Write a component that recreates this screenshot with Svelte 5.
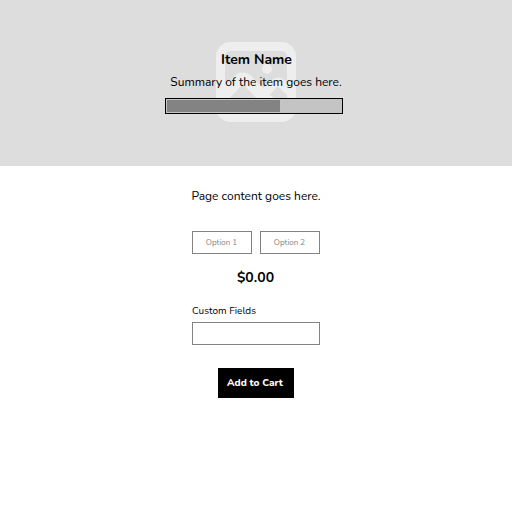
<script>
  const options = ['Option 1', 'Option 2'];
  let custom = $state('');
  const progress = 65;
</script>

<main>
  <header>
    <svg class="picture" viewBox="0 0 80 80" aria-hidden="true">
      <rect x="4.5" y="4.5" width="71" height="71" rx="10" fill="none" stroke="#eee" stroke-width="9" />
      <path d="M7 54 L22 39 Q27 34 32 39 L66 73" fill="none" stroke="#eee" stroke-width="12" />
      <path d="M48 52 L58 42 Q62 38 66 42 L73 49" fill="none" stroke="#eee" stroke-width="9" />
      <circle cx="51" cy="27" r="5" fill="#eee" />
    </svg>
    <h1><span>Item Name</span></h1>
    <p class="summary"><span>Summary of the item goes here.</span></p>
    <div class="bar"><div class="fill" style="width: {progress}%"></div></div>
  </header>
  <section>
    <p class="content"><span>Page content goes here.</span></p>
    <div class="options">
      {#each options as option}<button>{option}</button>{/each}
    </div>
    <strong class="price">$0.00</strong>
    <label>Custom Fields<input bind:value={custom} /></label>
    <button class="cart">Add to Cart</button>
  </section>
</main>

<style>
  :global(body) { margin: 0; background: #fff; }
  main { width: 512px; height: 512px; font-family: Nunito, "Noto Sans", sans-serif; color: #000; overflow: hidden; }
  header { position: relative; box-sizing: border-box; height: 166px; padding-top: 50px; background: #ddd; display: flex; flex-direction: column; align-items: center; }
  .picture { position: absolute; left: 216px; top: 42px; width: 80px; height: 80px; }
  h1, p { margin: 0; position: relative; white-space: nowrap; }
  h1 { font-size: 14px; line-height: 20px; font-weight: 700; padding-left: 1px; }
  .summary { margin-top: 3px; font-size: 12px; line-height: 18px; }
  .bar { position: relative; box-sizing: border-box; width: 178px; height: 16px; margin: 7px 4px 0 0; border: 1px solid #000; padding: 1px; background: #c4c4c4; }
  .fill { height: 12px; background: #838383; }
  section { width: 128px; margin: 0 auto; padding-top: 21px; display: flex; flex-direction: column; align-items: center; }
  .content { font-size: 12px; line-height: 18px; }
  .options { display: flex; gap: 8px; width: 128px; margin-top: 26px; }
  button { box-sizing: border-box; font-family: inherit; border: 1px solid #838383; background: #fff; padding: 0; white-space: nowrap; }
  .options button { width: 60px; height: 23px; padding-right: 1px; font-size: 8px; color: #838383; }
  .price { margin: 14px 0 0; padding-right: 1px; font-size: 14px; line-height: 20px; }
  label { width: 128px; margin-top: 16px; font-size: 10px; line-height: 14px; }
  input { display: block; box-sizing: border-box; width: 128px; height: 23px; margin-top: 4px; border: 1px solid #838383; border-radius: 0; background: #fff; }
  .cart { width: 76px; height: 30px; margin-top: 23px; padding-right: 2px; border: 0; background: #000; color: #fff; font-size: 10px; font-weight: 800; }
</style>
